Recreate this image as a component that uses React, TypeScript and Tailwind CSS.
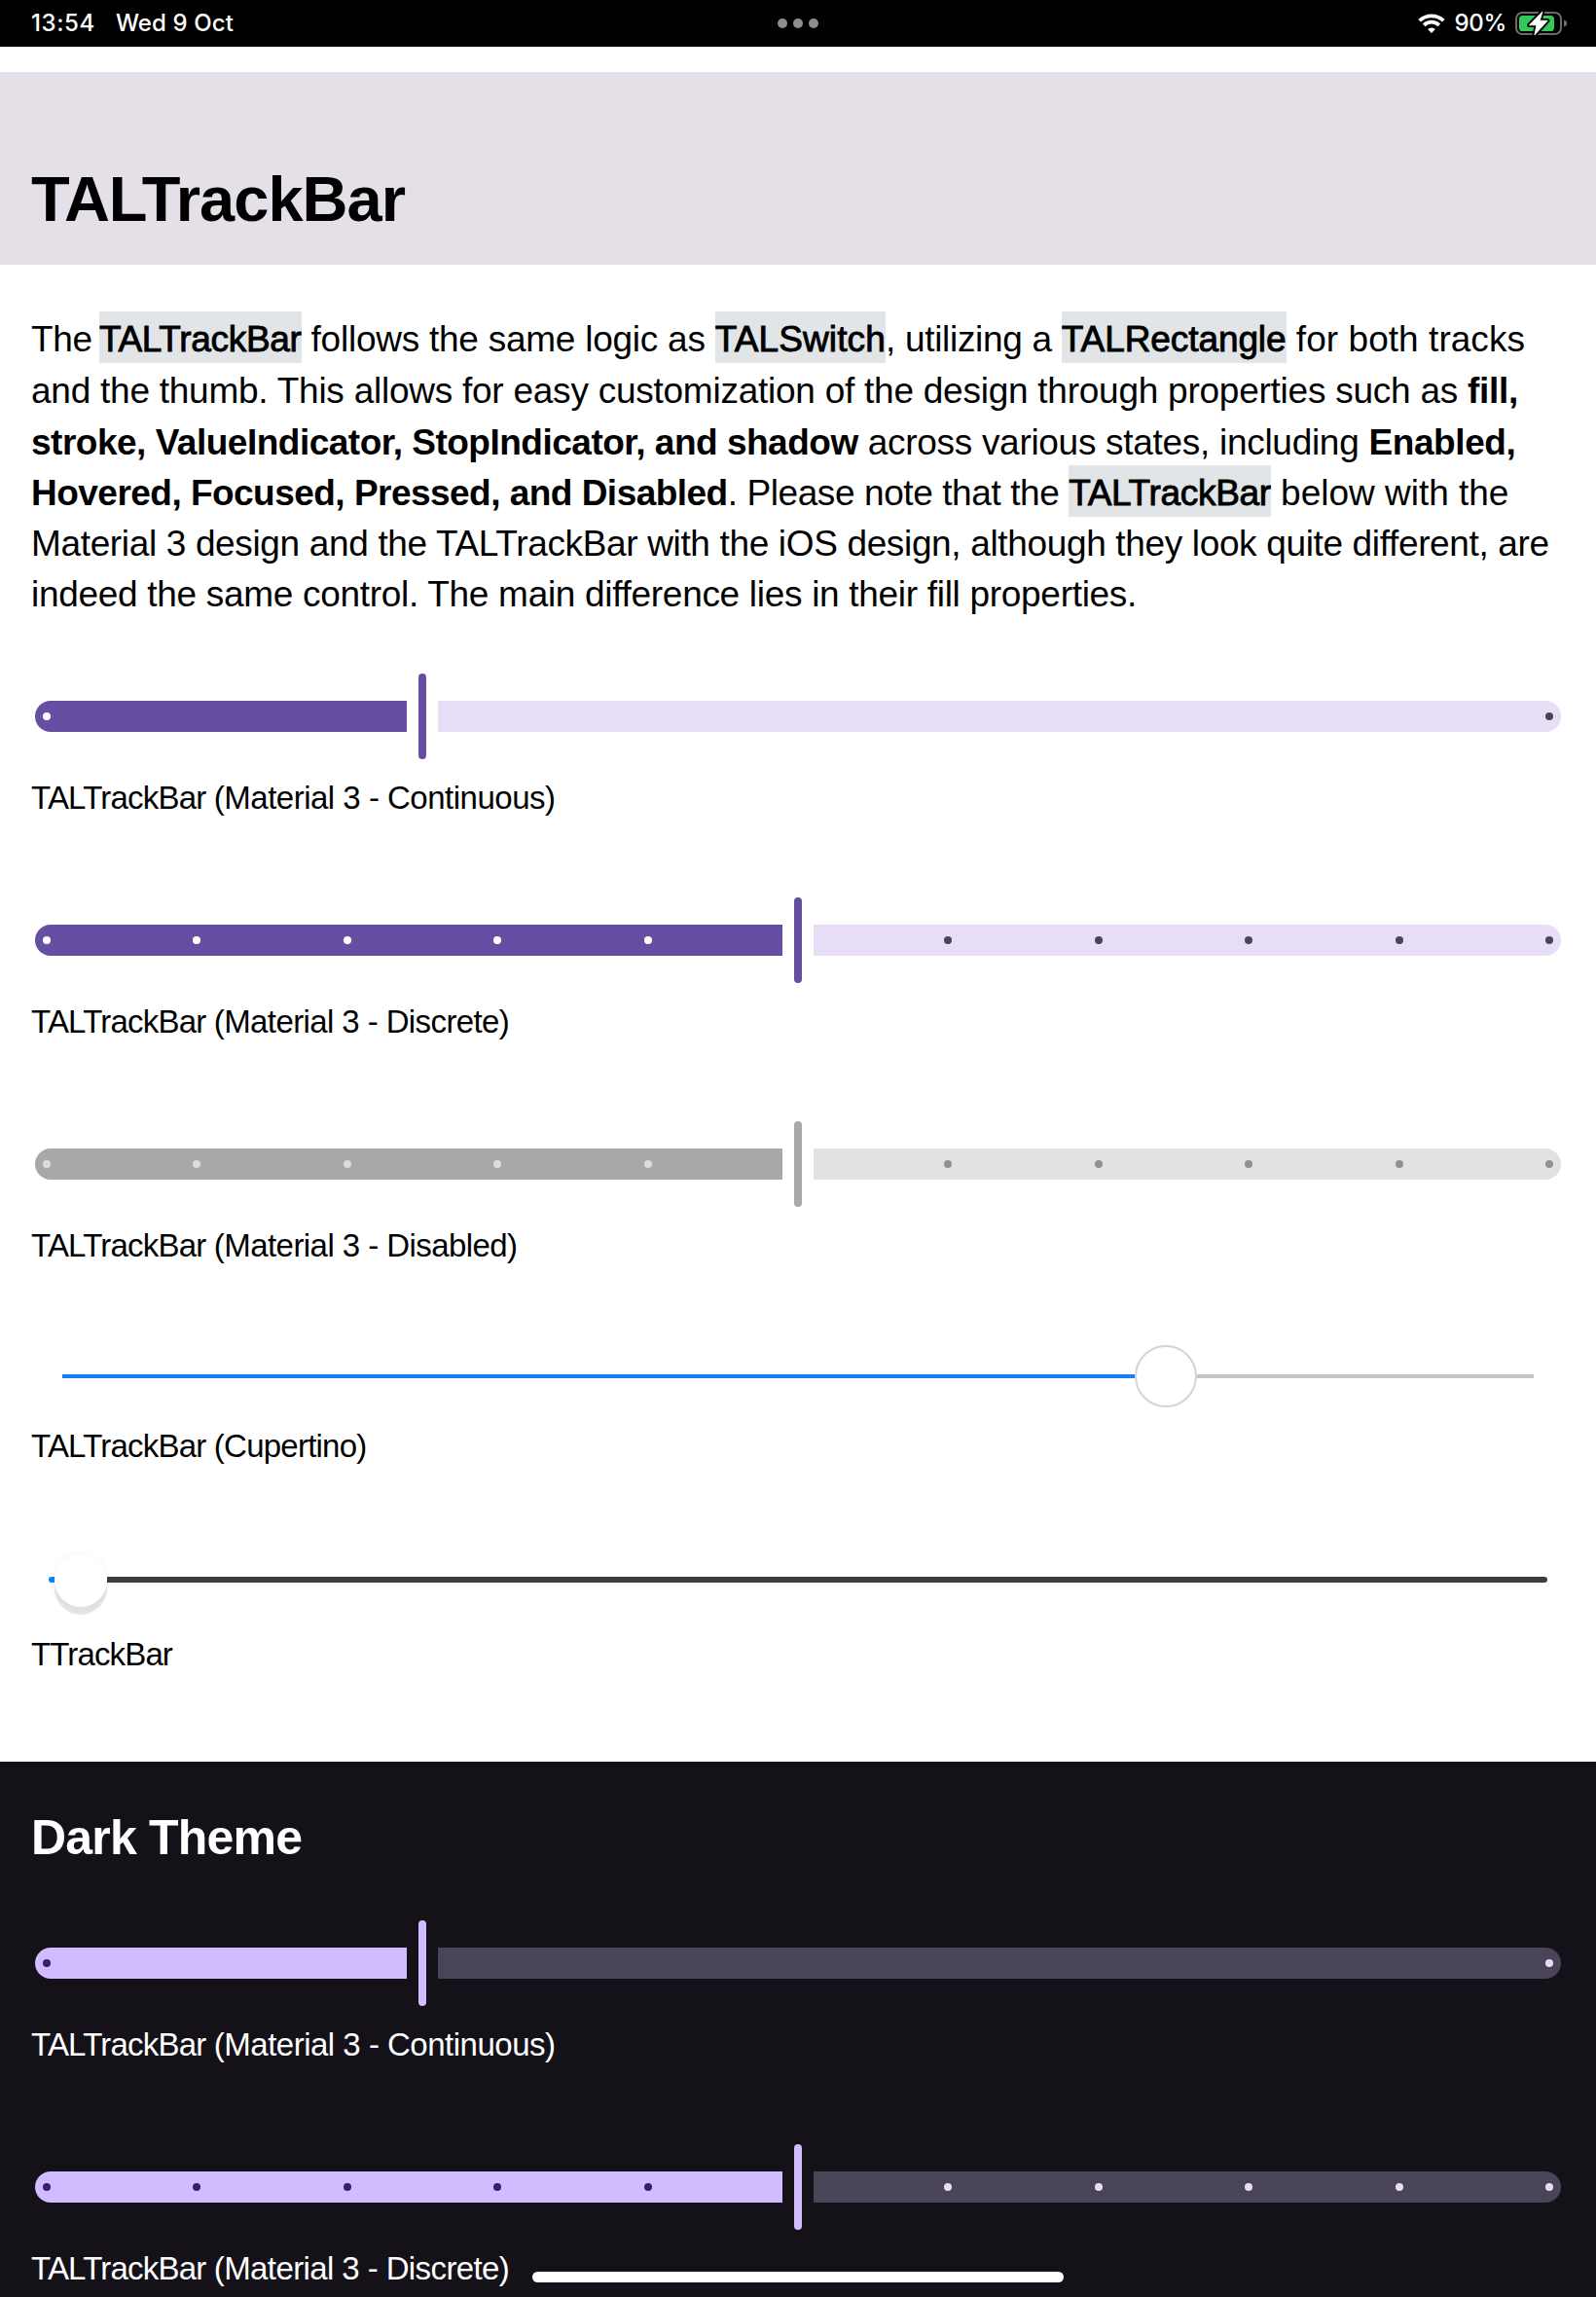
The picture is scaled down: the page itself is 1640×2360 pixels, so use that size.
import type { ReactNode } from "react";

type Palette = { active: string; inactive: string; activeDot: string; inactiveDot: string };

const light: Palette = {
  active: "bg-[#664fa3]",
  inactive: "bg-[#e7ddf6]",
  activeDot: "bg-white",
  inactiveDot: "bg-[#494458]",
};
const disabled: Palette = {
  active: "bg-[#a8a8a8]",
  inactive: "bg-[#e2e2e2]",
  activeDot: "bg-[#dcdcdc]",
  inactiveDot: "bg-[#919191]",
};
const dark: Palette = {
  active: "bg-[#d0bcff]",
  inactive: "bg-[#494458]",
  activeDot: "bg-[#381e72]",
  inactiveDot: "bg-[#e8def8]",
};

function StatusBar() {
  return (
    <div className="grid h-12 grid-cols-3 items-center bg-black pr-[29px] pl-8 font-['Inter'] text-2xl leading-12 font-medium text-white">
      <div className="flex h-12 gap-[21px]">
        <span className="tracking-[0.6px]">13:54</span>
        <span className="tracking-[0.1px]">Wed 9 Oct</span>
      </div>
      <div className="flex items-center justify-center gap-1.5 pr-[3px]">
        <span className="size-2.5 rounded-full bg-[#8e8e8e]" />
        <span className="size-2.5 rounded-full bg-[#8e8e8e]" />
        <span className="size-2.5 rounded-full bg-[#8e8e8e]" />
      </div>
      <div className="flex h-12 justify-end">
        <svg className="mt-[13px] mr-[9px] h-[22px] w-7" viewBox="0 0 28 22" fill="none" stroke="white" strokeWidth="3.7">
          <path d="M1.7 8.3a17.6 17.6 0 0 1 24.6 0" />
          <path d="M6.2 12.9a11.1 11.1 0 0 1 15.6 0" />
          <path d="M14 21l-3.9-4a5.6 5.6 0 0 1 7.8 0z" fill="white" stroke="none" />
        </svg>
        <span className="mr-[9px] tracking-[-0.3px]">90%</span>
        <svg className="mt-[10px] h-7 w-[54px]" viewBox="0 0 54 28">
          <rect x="1" y="3" width="46" height="22" rx="6.2" fill="none" stroke="#6b6b6b" strokeWidth="2" />
          <path d="M50 10.2c1.9.8 3.2 2.1 3.2 3.8s-1.3 3-3.2 3.8z" fill="#6b6b6b" />
          <rect x="4" y="6" width="36" height="16" rx="3.6" fill="#34c759" />
          <path
            d="M28 1.900 14.400 15.800h7.500L19.900 26 33.200 11.200h-8z"
            fill="black"
            stroke="black"
            strokeWidth="4.5"
            strokeLinejoin="round"
          />
          <path
            d="M28 1.900 14.400 15.800h7.500L19.900 26 33.200 11.200h-8z"
            fill="white"
            stroke="white"
            strokeWidth="0.8"
            strokeLinejoin="round"
          />
        </svg>
      </div>
    </div>
  );
}

function Code({ children, className }: { children: ReactNode; className: string }) {
  return (
    <span className={`bg-[#e1e5e8] pt-2 pb-1 [-webkit-text-stroke:0.9px_black] ${className}`}>{children}</span>
  );
}

function Label({ children, className }: { children: ReactNode; className: string }) {
  return (
    <p className="mt-5 pl-8 text-[33px] leading-10 whitespace-pre">
      <span className="tracking-[-0.8px]">{"TALTrackBar "}</span>
      <span className={className}>{children}</span>
    </p>
  );
}

function MaterialTrack({ palette, discrete = false }: { palette: Palette; discrete?: boolean }) {
  const stops = discrete ? 11 : 2;
  return (
    <div className="relative mr-9 ml-9 flex h-[88px] items-center gap-3">
      <div className={`h-8 rounded-l-full ${discrete ? "w-[768px]" : "w-[382px]"} ${palette.active}`} />
      <div className={`h-full w-2 rounded-full ${palette.active}`} />
      <div className={`h-8 flex-1 rounded-r-full ${palette.inactive}`} />
      <div className="absolute inset-0 flex items-center justify-between px-2">
        {Array.from({ length: stops }, (_, i) => {
          const middle = (stops - 1) / 2;
          const color = i < middle ? palette.activeDot : i > middle ? palette.inactiveDot : "bg-transparent";
          return <span key={i} className={`size-2 rounded-full ${color}`} />;
        })}
      </div>
    </div>
  );
}

export default function App() {
  return (
    <div className="relative h-[2360px] w-[1640px] overflow-hidden bg-white font-['Liberation_Sans',Arial,sans-serif] text-black">
      <StatusBar />
      <header className="mt-[26px] h-[198px] bg-[#e5e0e8] pt-[91px] pl-8">
        <h1 className="text-[65px] leading-[80px] font-bold tracking-[-1px]">TALTrackBar</h1>
      </header>

      <div className="-mb-px pt-[50px] pl-8 text-[37px] leading-[53px] whitespace-pre">
        <p>
          <span className="mr-[-2.5px] tracking-[-0.4px]">{"The "}</span>
          <Code className="tracking-[-0.316px]">TALTrackBar</Code>
          <span className="tracking-[-0.247px]">{" follows the same logic as "}</span>
          <Code className="tracking-[0.12px]">TALSwitch</Code>
          <span className="tracking-[-0.3px]">{", utilizing a "}</span>
          <Code className="tracking-[-0.086px]">TALRectangle</Code>
          <span className="tracking-[0.05px]">{" for both tracks"}</span>
        </p>
        <p>
          <span className="tracking-[-0.249px]">
            {"and the thumb. This allows for easy customization of the design through properties such as "}
          </span>
          <b className="tracking-[-0.29px]">fill,</b>
        </p>
        <p>
          <b className="tracking-[-0.492px]">stroke, ValueIndicator, StopIndicator, and shadow</b>
          <span className="tracking-[-0.294px]">{" across various states, including "}</span>
          <b className="tracking-[-0.4px]">Enabled,</b>
        </p>
        <p className="leading-[52px]">
          <b className="tracking-[-0.524px]">Hovered, Focused, Pressed, and Disabled</b>
          <span className="tracking-[-0.412px]">{". Please note that the "}</span>
          <Code className="tracking-[-0.316px]">TALTrackBar</Code>
          <span className="tracking-[-0.01px]">{" below with the"}</span>
        </p>
        <p className="leading-[52px] tracking-[-0.349px]">
          Material 3 design and the TALTrackBar with the iOS design, although they look quite different, are
        </p>
        <p className="leading-[52px] tracking-[-0.301px]">
          indeed the same control. The main difference lies in their fill properties.
        </p>
      </div>

      <section className="flex flex-col gap-[82px] pt-14">
        <div>
          <MaterialTrack palette={light} />
          <Label className="tracking-[-0.5px]">(Material 3 - Continuous)</Label>
        </div>
        <div>
          <MaterialTrack palette={light} discrete />
          <Label className="tracking-[-0.6px]">(Material 3 - Discrete)</Label>
        </div>
        <div>
          <MaterialTrack palette={disabled} discrete />
          <Label className="tracking-[-0.56px]">(Material 3 - Disabled)</Label>
        </div>
        <div>
          <div className="mx-16 flex h-16 items-center">
            <div className="h-1 w-[1102px] bg-[#157efb]" />
            <div className="size-16 rounded-full border-2 border-[#d4d4d4] bg-white" />
            <div className="h-1 flex-1 bg-[#c4c4c4]" />
          </div>
          <Label className="tracking-[-0.76px]">(Cupertino)</Label>
        </div>
        <div className="pt-[9px]">
          <div className="mx-[50px] flex h-[54px] items-start">
            <div className="mt-[23px] h-1.5 w-1.5 rounded-l-full bg-[#0a84ff]" />
            <div className="relative size-[54px] rounded-full bg-white shadow-[0_8px_1px_rgba(0,0,0,0.1),0_1px_8px_rgba(0,0,0,0.05)]" />
            <div className="mt-[23px] h-1.5 flex-1 rounded-r-full bg-[#3d3b40]" />
          </div>
          <p className="mt-[29px] pl-8 text-[33px] leading-10 tracking-[-0.866px]">TTrackBar</p>
        </div>
      </section>

      <section className="mt-[90px] h-[550px] bg-[#141118] pt-12 text-white">
        <h2 className="pl-8 text-[50px] leading-[60px] font-bold tracking-[-0.8px]">Dark Theme</h2>
        <div className="flex flex-col gap-[82px] pt-[55px]">
          <div>
            <MaterialTrack palette={dark} />
            <Label className="tracking-[-0.5px]">(Material 3 - Continuous)</Label>
          </div>
          <div>
            <MaterialTrack palette={dark} discrete />
            <Label className="tracking-[-0.6px]">(Material 3 - Discrete)</Label>
          </div>
        </div>
      </section>

      <div className="absolute bottom-[15px] left-[547px] h-[11px] w-[546px] rounded-full bg-white" />
    </div>
  );
}
